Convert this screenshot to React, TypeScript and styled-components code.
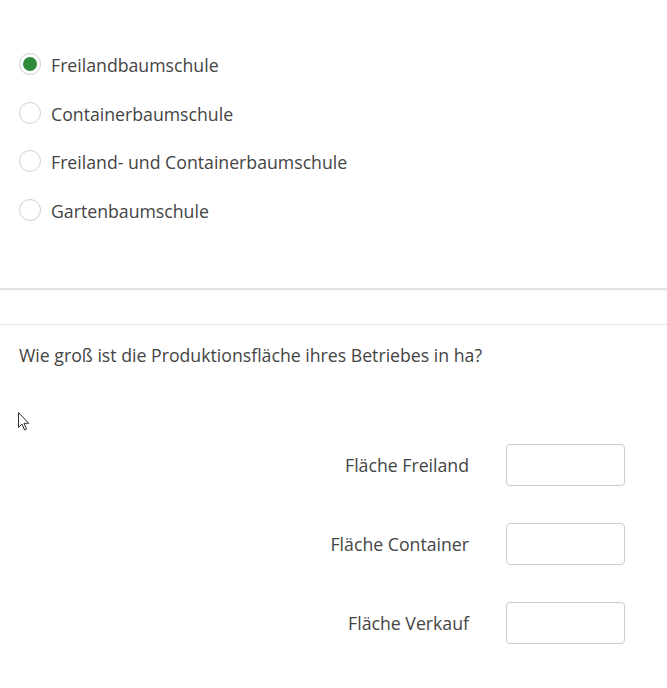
import React from "react";
import styled, { createGlobalStyle } from "styled-components";

const Global = createGlobalStyle`
  html, body { margin: 0; padding: 0; background: #fff; }
  body { font-family: "Open Sans", "Noto Sans", sans-serif; color: #444; }
`;

const Page = styled.div`
  width: 667px;
  height: 688px;
  position: relative;
  overflow: hidden;
`;

const RadioGroup = styled.div`
  display: flex;
  flex-direction: column;
  gap: 26.5px;
  padding: 53px 0 0 19px;
  height: 235px;
  box-sizing: border-box;
`;

const RadioRow = styled.label`
  display: flex;
  align-items: center;
  gap: 10px;
  font-size: 17.7px;
  line-height: 22px;
  height: 22px;
`;

const RadioText = styled.span`
  position: relative;
  top: 1px;
`;

const RadioCircle = styled.span<{ $checked?: boolean }>`
  width: 22px;
  height: 22px;
  border-radius: 50%;
  border: 1px solid #d0d0d0;
  box-sizing: border-box;
  display: flex;
  align-items: center;
  justify-content: center;
  flex: none;
  &::after {
    content: "";
    width: 14px;
    height: 14px;
    border-radius: 50%;
    background: ${(p) => (p.$checked ? "#2f8a3c" : "transparent")};
  }
`;

const ThickRule = styled.div`
  height: 2px;
  background: #e2e2e2;
  box-shadow: 0 1px 1px rgba(0,0,0,0.04);
  margin-top: 53px;
`;

const ThinRule = styled.div`
  height: 1px;
  background: #e4e4e4;
  margin-top: 34px;
`;

const Question = styled.div`
  font-size: 17.7px;
  line-height: 22px;
  padding: 19px 0 0 19px;
`;

const Fields = styled.div`
  display: flex;
  flex-direction: column;
  gap: 37px;
  margin-top: 78px;
`;

const FieldRow = styled.div`
  display: grid;
  grid-template-columns: 469px 119px;
  column-gap: 37px;
  align-items: center;
`;

const FieldLabel = styled.span`
  font-size: 17.7px;
  text-align: right;
`;

const Input = styled.input`
  height: 42px;
  box-sizing: border-box;
  border: 1px solid #cccccc;
  border-radius: 4px;
  background: #fff;
  margin: 0;
  padding: 0 8px;
  font: inherit;
`;

const Cursor = styled.svg`
  position: absolute;
  left: 18px;
  top: 412px;
`;

const options = [
  { label: "Freilandbaumschule", checked: true },
  { label: "Containerbaumschule" },
  { label: "Freiland- und Containerbaumschule" },
  { label: "Gartenbaumschule" },
];

const fields = ["Fläche Freiland", "Fläche Container", "Fläche Verkauf"];

export default function App() {
  return (
    <Page>
      <Global />
      <RadioGroup>
        {options.map((o) => (
          <RadioRow key={o.label}>
            <RadioCircle $checked={o.checked} />
            <RadioText>{o.label}</RadioText>
          </RadioRow>
        ))}
      </RadioGroup>
      <ThickRule />
      <ThinRule />
      <Question>Wie groß ist die Produktionsfläche ihres Betriebes in ha?</Question>
      <Fields>
        {fields.map((f) => (
          <FieldRow key={f}>
            <FieldLabel>{f}</FieldLabel>
            <Input type="text" />
          </FieldRow>
        ))}
      </Fields>
      <Cursor width="13" height="20" viewBox="0 0 13 20">
        <path d="M0.5 0.5 L0.5 15.5 L4 12 L6.5 18 L8.5 17 L6 11.3 L10.8 11.3 Z" fill="#fff" stroke="#333" strokeWidth="1" strokeLinejoin="round" />
      </Cursor>
    </Page>
  );
}
